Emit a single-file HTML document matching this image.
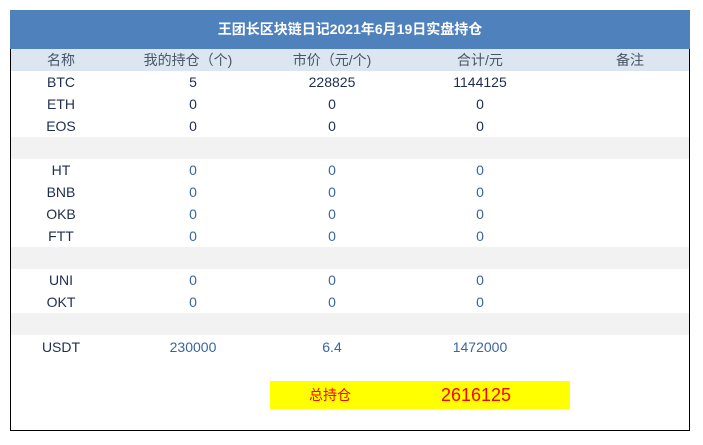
<html><head><style>
body{margin:0;width:703px;height:445px;background:#fff;position:relative;font-family:"Liberation Sans","Noto Sans CJK SC",sans-serif;overflow:hidden}
.f{position:absolute;left:10px;top:10px;width:678px;height:420px;border:1px solid #000;border-top:0}
.hd{position:absolute;left:10px;top:10px;width:680px;height:39px;background:#4f81bd;color:#fff;font-weight:bold;font-size:14px;text-align:center;line-height:39px}
.sh{position:absolute;left:11px;top:49px;width:678px;height:22px;background:#dce6f1}
.g{position:absolute;left:11px;width:678px;height:22px;background:#f2f2f2}
.t{position:absolute;width:120px;text-align:center;font-size:14px;line-height:22px;color:#1f2d4e}
.b{color:#3a66a0}
.h{color:#4a5566}
</style></head><body>
<div class="f"></div>
<div class="hd">王团长区块链日记2021年6月19日实盘持仓</div>
<div class="sh"></div>
<div class="g" style="top:137px"></div>
<div class="g" style="top:247px"></div>
<div class="g" style="top:313px"></div>
<div class="t h" style="left:1px;top:49px">名称</div>
<div class="t h" style="left:128px;top:49px">我的持仓（个)</div>
<div class="t h" style="left:272px;top:49px">市价（元/个)</div>
<div class="t h" style="left:420px;top:49px">合计/元</div>
<div class="t h" style="left:570px;top:49px">备注</div>

<div class="t" style="left:1px;top:71px">BTC</div><div class="t" style="left:133px;top:71px">5</div><div class="t" style="left:272px;top:71px">228825</div><div class="t" style="left:420px;top:71px">1144125</div>
<div class="t" style="left:1px;top:93px">ETH</div><div class="t" style="left:133px;top:93px">0</div><div class="t" style="left:272px;top:93px">0</div><div class="t" style="left:420px;top:93px">0</div>
<div class="t" style="left:1px;top:115px">EOS</div><div class="t" style="left:133px;top:115px">0</div><div class="t" style="left:272px;top:115px">0</div><div class="t" style="left:420px;top:115px">0</div>

<div class="t" style="left:1px;top:159px">HT</div><div class="t b" style="left:133px;top:159px">0</div><div class="t b" style="left:272px;top:159px">0</div><div class="t b" style="left:420px;top:159px">0</div>
<div class="t" style="left:1px;top:181px">BNB</div><div class="t b" style="left:133px;top:181px">0</div><div class="t b" style="left:272px;top:181px">0</div><div class="t b" style="left:420px;top:181px">0</div>
<div class="t" style="left:1px;top:203px">OKB</div><div class="t b" style="left:133px;top:203px">0</div><div class="t b" style="left:272px;top:203px">0</div><div class="t b" style="left:420px;top:203px">0</div>
<div class="t" style="left:1px;top:225px">FTT</div><div class="t b" style="left:133px;top:225px">0</div><div class="t b" style="left:272px;top:225px">0</div><div class="t b" style="left:420px;top:225px">0</div>

<div class="t" style="left:1px;top:269px">UNI</div><div class="t b" style="left:133px;top:269px">0</div><div class="t b" style="left:272px;top:269px">0</div><div class="t b" style="left:420px;top:269px">0</div>
<div class="t" style="left:1px;top:291px">OKT</div><div class="t b" style="left:133px;top:291px">0</div><div class="t b" style="left:272px;top:291px">0</div><div class="t b" style="left:420px;top:291px">0</div>

<div class="t" style="left:1px;top:336px">USDT</div><div class="t b" style="left:133px;top:336px">230000</div><div class="t b" style="left:272px;top:336px">6.4</div><div class="t b" style="left:420px;top:336px">1472000</div>

<div style="position:absolute;left:270px;top:381px;width:300px;height:28px;background:#ffff00"></div>
<div style="position:absolute;left:290px;top:381px;width:80px;line-height:28px;text-align:center;color:#ff0000;font-size:14px">总持仓</div>
<div style="position:absolute;left:416px;top:381px;width:120px;line-height:28px;text-align:center;color:#ff0000;font-size:18px">2616125</div>
</body></html>
